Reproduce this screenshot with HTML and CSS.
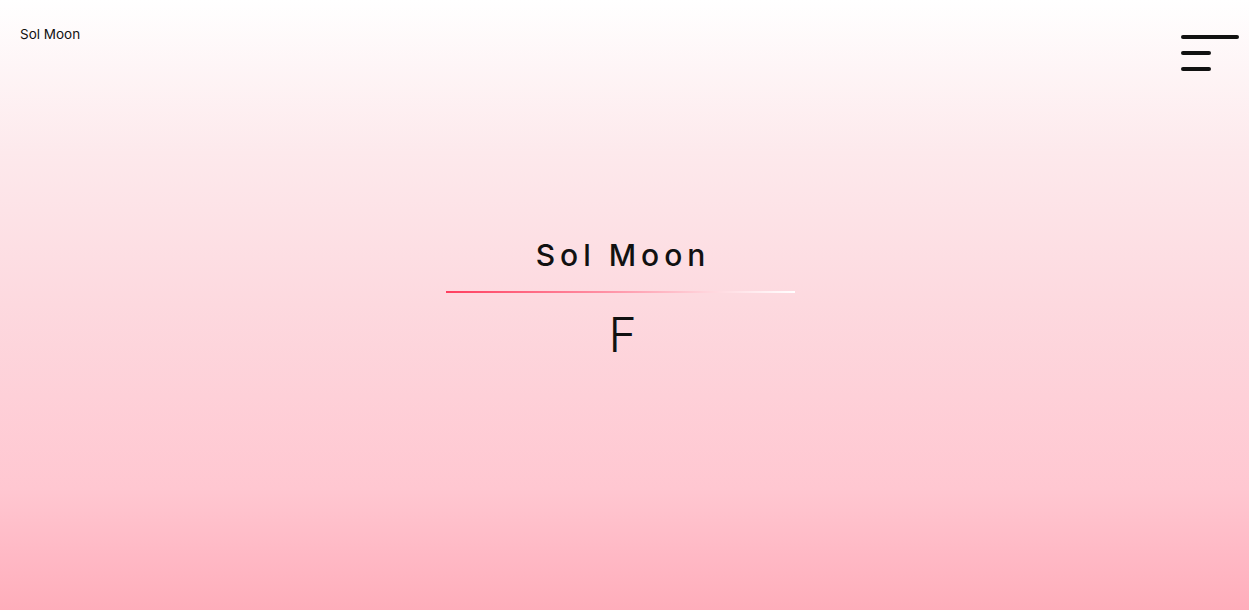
FILE: index.html
```html
<!DOCTYPE html>
<html lang="en">
<head>
<meta charset="utf-8">
<title>Sol Moon</title>
<link rel="stylesheet" href="styles.css">
</head>
<body>
<div class="page">
  <header class="topbar">
    <a class="brand">Sol Moon</a>
    <button class="menu" aria-label="Menu">
      <svg width="62" height="40" viewBox="0 0 62 40">
        <g stroke="#111" stroke-width="4" stroke-linecap="round">
          <line x1="4" y1="2" x2="58" y2="2"/>
          <line x1="4" y1="18" x2="30" y2="18"/>
          <line x1="4" y1="34" x2="30" y2="34"/>
        </g>
      </svg>
    </button>
  </header>
  <main class="hero">
    <h1 class="title">Sol Moon</h1>
    <div class="rule"></div>
    <p class="typed">F</p>
  </main>
</div>
</body>
</html>
```

FILE: styles.css
```css
* { box-sizing: border-box; }
html, body { margin: 0; padding: 0; height: 100%; }
body {
  font-family: "Inter", "Liberation Sans", sans-serif;
  color: #111;
}
.page {
  height: 610px;
  overflow: hidden;
  background: linear-gradient(to bottom, #ffffff 0%, #fde9ec 25%, #fdd9df 50%, #ffc7d1 80%, #ffadbb 100%);
  display: flex;
  flex-direction: column;
}
.topbar {
  display: flex;
  justify-content: space-between;
  align-items: flex-start;
  padding: 26px 8px 0 20px;
  height: 120px;
}
.brand {
  font-size: 13.5px;
  line-height: 17px;
  color: #111;
  letter-spacing: 0;
}
.menu {
  background: none;
  border: 0;
  padding: 0;
  margin-top: 9px;
  line-height: 0;
  cursor: pointer;
}
.hero {
  display: flex;
  flex-direction: column;
  align-items: center;
  padding-top: 117px;
  padding-right: 8px;
}
.title {
  margin: 0;
  font-size: 30px;
  font-weight: 500;
  letter-spacing: 5px;
  line-height: 36px;
  padding-left: 5px;
}
.rule {
  margin-top: 18px;
  width: 349px;
  height: 2px;
  background: linear-gradient(to right, #ff3f5f, #ff8fa3 45%, #ffd5dc 75%, #ffffff);
}
.typed {
  margin: 16px 0 0;
  padding-left: 4px;
  font-size: 48px;
  font-weight: 300;
  line-height: 52px;
}
```
